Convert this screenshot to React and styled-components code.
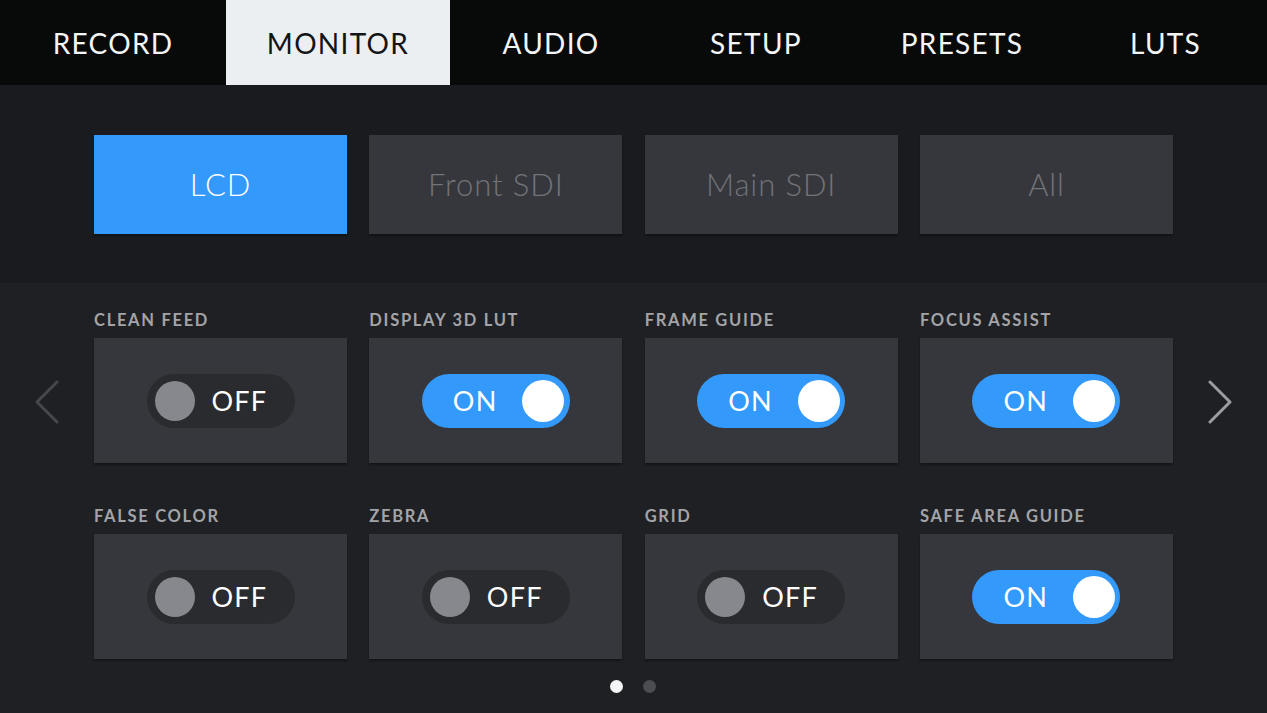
import styled, { createGlobalStyle } from "styled-components";

const GlobalStyle = createGlobalStyle`
  html, body {
    margin: 0;
    padding: 0;
    background: #1f2023;
  }
  body {
    font-family: Lato, "Open Sans", sans-serif;
  }
  * {
    box-sizing: border-box;
  }
`;

const Screen = styled.div`
  width: 100%;
  height: 100vh;
  display: flex;
  flex-direction: column;
  background: #1f2023;
  overflow: hidden;
`;

const TabBar = styled.nav`
  display: grid;
  grid-template-columns: 226px 224px 202px 208px 204px 1fr;
  height: 85px;
  background: #080909;
`;

const Tab = styled.div`
  display: flex;
  align-items: center;
  justify-content: center;
  font-size: 28px;
  letter-spacing: 1.3px;
  color: ${(p) => (p.$active ? "#131416" : "#f4f5f6")};
  background: ${(p) => (p.$active ? "#eceff2" : "transparent")};
`;

const Outputs = styled.section`
  height: 198px;
  padding-top: 50px;
  background: #1a1b1e;
  display: grid;
  grid-template-columns: repeat(4, 253px);
  column-gap: 22.3px;
  justify-content: center;
  align-content: start;
`;

const OutputButton = styled.div`
  height: 99px;
  display: flex;
  align-items: center;
  justify-content: center;
  padding-bottom: 2px;
  font-size: 31px;
  font-weight: 300;
  letter-spacing: 0.9px;
  color: ${(p) => (p.$active ? "#ffffff" : "#727378")};
  background: ${(p) => (p.$active ? "#3399fa" : "#36373c")};
  box-shadow: 0 2px 2px rgba(0, 0, 0, 0.35);
`;

const Settings = styled.section`
  flex: 1;
  display: flex;
  justify-content: center;
  padding-top: 27px;
`;

const ArrowSlot = styled.div`
  width: 94px;
  display: flex;
  justify-content: center;
  align-items: flex-start;
  padding-top: 70px;
  color: ${(p) => (p.$dim ? "#46474c" : "#9b9da1")};
`;

const Middle = styled.div`
  display: flex;
  flex-direction: column;
  align-items: center;
`;

const Grid = styled.div`
  display: grid;
  grid-template-columns: repeat(4, 253px);
  column-gap: 22.3px;
  row-gap: 43px;
`;

const Cell = styled.div`
  display: flex;
  flex-direction: column;
`;

const Label = styled.div`
  font-size: 16.5px;
  line-height: 20px;
  font-weight: 700;
  letter-spacing: 1.7px;
  color: #a3a4a8;
  margin-bottom: 8px;
  white-space: nowrap;
`;

const Tile = styled.div`
  height: 125px;
  background: #36373c;
  box-shadow: 0 2px 2px rgba(0, 0, 0, 0.35);
  display: flex;
  align-items: center;
  justify-content: center;
`;

const Switch = styled.div`
  width: 148px;
  height: 54px;
  border-radius: 27px;
  display: flex;
  align-items: center;
  flex-direction: ${(p) => (p.$on ? "row-reverse" : "row")};
  justify-content: ${(p) => (p.$on ? "flex-end" : "flex-start")};
  gap: ${(p) => (p.$on ? "25px" : "17px")};
  padding: ${(p) => (p.$on ? "0 6px 0 31px" : "0 0 0 8px")};
  background: ${(p) => (p.$on ? "#3399fa" : "#2a2b2f")};
`;

const Knob = styled.span`
  width: ${(p) => (p.$on ? "42px" : "40px")};
  height: ${(p) => (p.$on ? "42px" : "40px")};
  border-radius: 50%;
  background: ${(p) => (p.$on ? "#ffffff" : "#86888d")};
  flex: none;
`;

const SwitchText = styled.span`
  font-size: 27px;
  letter-spacing: 1.2px;
  color: #ffffff;
`;

const Dots = styled.div`
  display: flex;
  gap: 20px;
  margin-top: 21px;
`;

const Dot = styled.span`
  width: 13px;
  height: 13px;
  border-radius: 50%;
  background: ${(p) => (p.$active ? "#f4f5f7" : "#4c4d52")};
`;

const Chevron = ({ dir }) => (
  <svg width="26" height="44" viewBox="0 0 26 44" fill="none">
    <path
      d={dir === "left" ? "M23 2 L3 22 L23 42" : "M3 2 L23 22 L3 42"}
      stroke="currentColor"
      strokeWidth="3"
      strokeLinecap="round"
      strokeLinejoin="round"
    />
  </svg>
);

const tabs = ["RECORD", "MONITOR", "AUDIO", "SETUP", "PRESETS", "LUTS"];
const outputs = ["LCD", "Front SDI", "Main SDI", "All"];
const settings = [
  { label: "CLEAN FEED", on: false },
  { label: "DISPLAY 3D LUT", on: true },
  { label: "FRAME GUIDE", on: true },
  { label: "FOCUS ASSIST", on: true },
  { label: "FALSE COLOR", on: false },
  { label: "ZEBRA", on: false },
  { label: "GRID", on: false },
  { label: "SAFE AREA GUIDE", on: true },
];

export default function App() {
  return (
    <Screen>
      <GlobalStyle />
      <TabBar>
        {tabs.map((t) => (
          <Tab key={t} $active={t === "MONITOR"}>
            {t}
          </Tab>
        ))}
      </TabBar>
      <Outputs>
        {outputs.map((o) => (
          <OutputButton key={o} $active={o === "LCD"}>
            {o}
          </OutputButton>
        ))}
      </Outputs>
      <Settings>
        <ArrowSlot $dim>
          <Chevron dir="left" />
        </ArrowSlot>
        <Middle>
          <Grid>
            {settings.map((s) => (
              <Cell key={s.label}>
                <Label>{s.label}</Label>
                <Tile>
                  <Switch $on={s.on}>
                    <Knob $on={s.on} />
                    <SwitchText>{s.on ? "ON" : "OFF"}</SwitchText>
                  </Switch>
                </Tile>
              </Cell>
            ))}
          </Grid>
          <Dots>
            <Dot $active />
            <Dot />
          </Dots>
        </Middle>
        <ArrowSlot>
          <Chevron dir="right" />
        </ArrowSlot>
      </Settings>
    </Screen>
  );
}
